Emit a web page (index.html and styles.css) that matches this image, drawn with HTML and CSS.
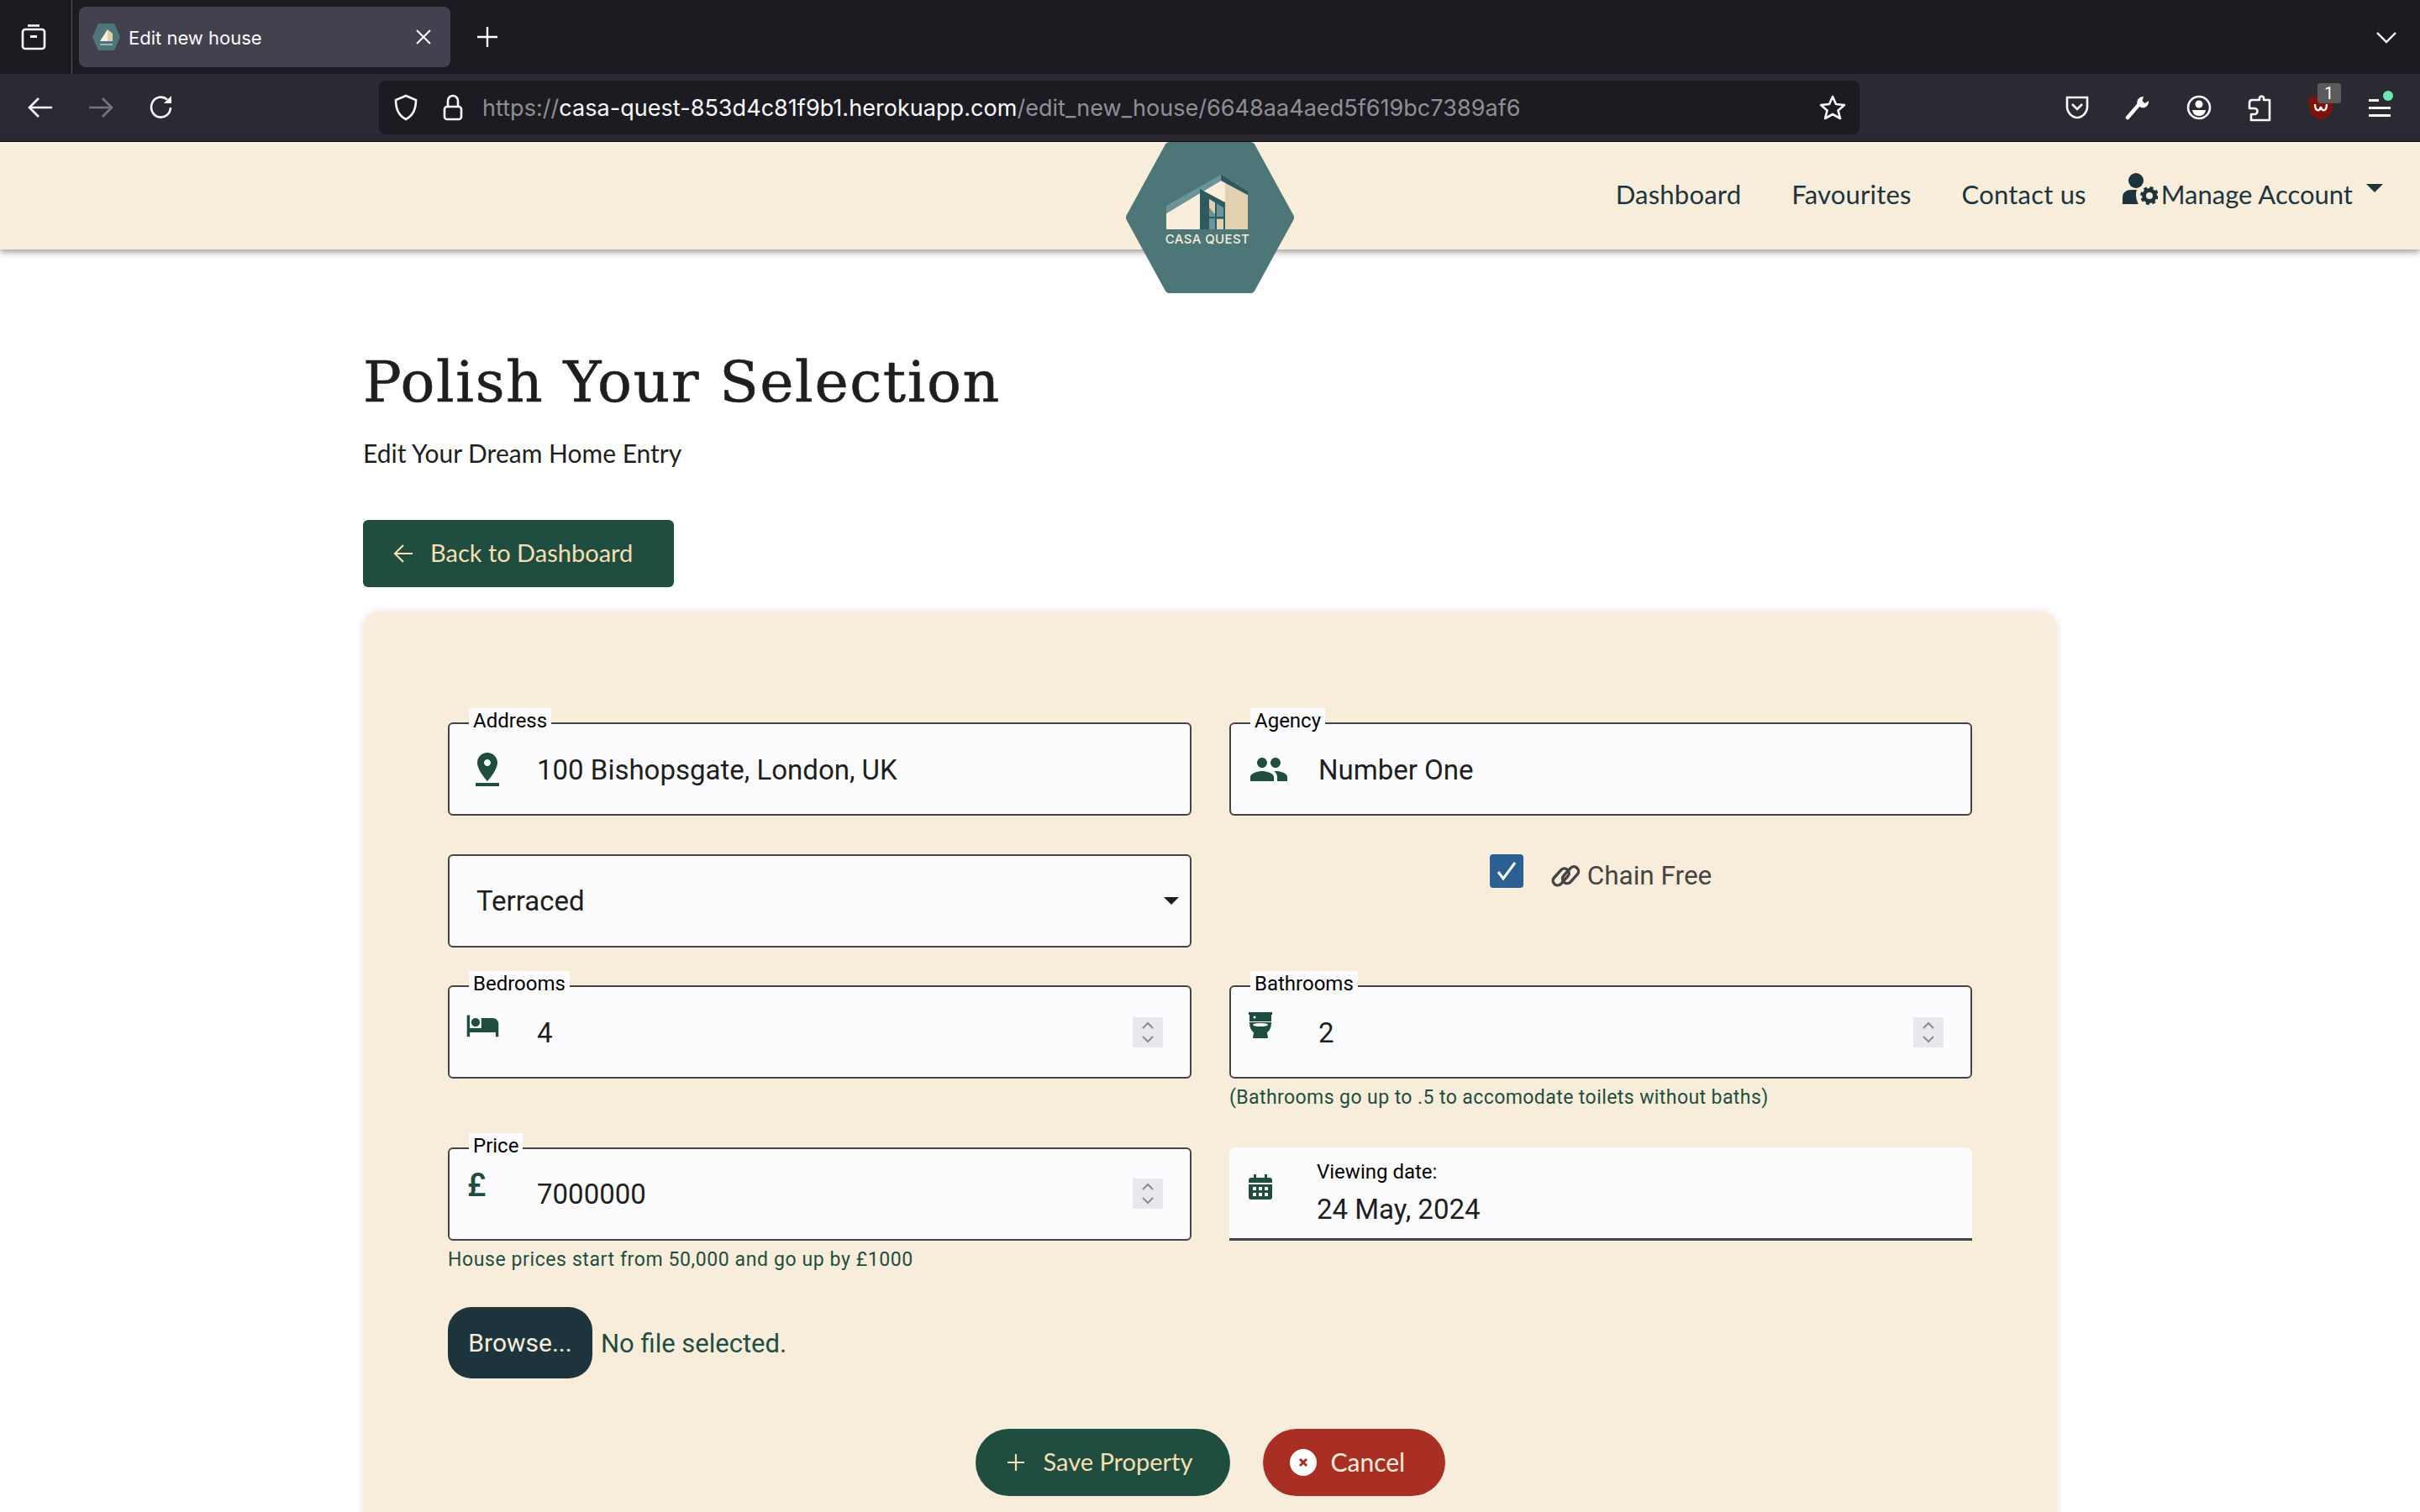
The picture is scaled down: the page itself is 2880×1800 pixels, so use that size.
FILE: index.html
```html
<!DOCTYPE html>
<html lang="en">
<head>
  <meta charset="UTF-8">
  <title>Edit new house</title>
  <link rel="stylesheet" href="styles.css">
</head>
<body>

  <div class="tab-strip">
    <div class="tab-list-btn">
      <svg width="30" height="32" viewBox="0 0 30 32" fill="none" stroke="#fbfbfe" stroke-width="2.6"><path d="M8 2.5h14"/><rect x="2" y="7" width="26" height="23" rx="3"/><rect x="11" y="14" width="8" height="3" fill="#fbfbfe" stroke="none"/></svg>
    </div>
    <div class="tab">
      <svg class="favicon" width="33" height="32" viewBox="0 0 33 32"><polygon points="7,0 26,0 33,16 26,32 7,32 0,16" fill="#4d7678"/><polygon points="9,21 18,7 18,21" fill="#f8eddb"/><polygon points="18,7 24,12 24,21 18,21" fill="#e2d0ae"/><path d="M9 25h15" stroke="#f8eddb" stroke-width="1"/></svg>
      <span class="tab-title">Edit new house</span>
      <svg class="tab-close" width="20" height="18" viewBox="0 0 20 18" stroke="#fbfbfe" stroke-width="2"><path d="M2 1l16 16M18 1L2 17"/></svg>
    </div>
    <svg class="new-tab" width="26" height="26" viewBox="0 0 26 26" stroke="#fbfbfe" stroke-width="2.4"><path d="M13 1v24M1 13h24"/></svg>
    <svg class="tab-chevron" width="26" height="15" viewBox="0 0 26 15" fill="none" stroke="#fbfbfe" stroke-width="2.4"><path d="M2 2l11 11L24 2"/></svg>
  </div>

  <div class="toolbar">
    <div class="nav-buttons">
      <svg width="30" height="26" viewBox="0 0 30 26" fill="none" stroke="#fbfbfe" stroke-width="2.6"><path d="M29 13H3M13 2L2 13l11 11"/></svg>
      <svg width="30" height="26" viewBox="0 0 30 26" fill="none" stroke="#77767d" stroke-width="2.6"><path d="M1 13h26M17 2l11 11-11 11"/></svg>
      <svg width="30" height="30" viewBox="0 0 30 30" fill="none" stroke="#fbfbfe" stroke-width="2.6"><path d="M26 15a11.5 12 0 1 1-4-9.5"/><path d="M27 1v9h-9z" fill="#fbfbfe" stroke="none"/></svg>
    </div>
    <div class="url-bar">
      <svg class="url-shield" width="30" height="32" viewBox="0 0 30 32" fill="none" stroke="#fbfbfe" stroke-width="2.6"><path d="M15 2l12 5c0 11-4 19-12 23C7 26 3 18 3 7z"/></svg>
      <svg class="url-lock" width="24" height="32" viewBox="0 0 24 32" fill="none" stroke="#fbfbfe" stroke-width="2.6"><path d="M6 15V8a6 6 0 0 1 12 0v7"/><rect x="2" y="15" width="20" height="15" rx="3"/></svg>
      <span class="url-text"><span class="url-dim">https://</span>casa-quest-853d4c81f9b1.herokuapp.com<span class="url-dim">/edit_new_house/6648aa4aed5f619bc7389af6</span></span>
      <svg class="url-star" width="32" height="32" viewBox="0 0 32 32" fill="none" stroke="#fbfbfe" stroke-width="2.6" stroke-linejoin="round"><path d="M16 3l4 9 10 1-7.500 6.500L25 29l-9-5-9 5 2.500-9.500L2 13l10-1z"/></svg>
    </div>
    <div class="toolbar-icons">
      <svg width="30" height="28" viewBox="0 0 30 28" fill="none" stroke="#fbfbfe" stroke-width="2.6"><path d="M3 2h24v11c0 7-6 13-12 13S3 20 3 13z"/><path d="M9 10l6 6 6-6"/></svg>
      <svg width="30" height="30" viewBox="0 0 30 30" fill="none" stroke="#fbfbfe"><path d="M3 27L16 12" stroke-width="4.500" stroke-linecap="round"/><path d="M22 2a7 7 0 0 0-7 10l4 3a7 7 0 0 0 9-8l-4.500 3-3-3z" fill="#fbfbfe" stroke="none"/></svg>
      <svg width="30" height="30" viewBox="0 0 30 30" fill="none" stroke="#fbfbfe" stroke-width="2.6"><circle cx="15" cy="15" r="13"/><circle cx="15" cy="11" r="4.500" fill="#fbfbfe" stroke="none"/><path d="M7 18h16c-1 5-4 7-8 7s-7-2-8-7z" fill="#fbfbfe" stroke="none"/></svg>
      <svg width="30" height="34" viewBox="0 0 30 34" fill="none" stroke="#fbfbfe" stroke-width="2.6"><path d="M15 8V5a3 3 0 0 1 5 0v3h7v24H5v-7h4a3.500 3.500 0 0 0 0-7H3v-6c0-2 1-4 3-4z" stroke-linejoin="round"/></svg>
      <div class="ublock">
        <svg width="30" height="30" viewBox="0 0 30 30"><path d="M1 2h28v13c0 7-6 12-14 15C7 27 1 22 1 15z" fill="#7c130b"/><path d="M8 11c0 9 6 9 7 3 1 6 7 6 7-3" fill="none" stroke="#fbfbfe" stroke-width="2.4"/></svg>
        <span class="ublock-badge">1</span>
      </div>
      <div class="app-menu">
        <span class="menu-line menu-line-short"></span>
        <span class="menu-line"></span>
        <span class="menu-line"></span>
        <span class="menu-dot"></span>
      </div>
    </div>
  </div>

  <header class="site-header">
    <a class="logo">
      <svg width="200" height="180" viewBox="0 0 200 180">
        <polygon points="52,6 148,6 194,90 148,174 52,174 6,90" fill="#4d7678" stroke="#4d7678" stroke-width="12" stroke-linejoin="round"/>
        <polygon points="48,85 113,46 113,104 48,104" fill="#f8eddb"/>
        <polygon points="48,76 113,39 113,46 48,85" fill="#6a9497"/>
        <polygon points="113,46 145,63 145,104 113,104" fill="#e2d0ae"/>
        <polygon points="113,46 118,48 118,104 113,104" fill="#f8eddb"/>
        <polygon points="113,39 145,59 145,63 113,46" fill="#2c5a5e"/>
        <polygon points="88,56 118,72 118,104 88,104" fill="#2c5a5e"/>
        <polygon points="99,68 116,78 116,104 99,104" fill="#6a9497"/>
        <polygon points="99,68 106,72 106,86 99,78" fill="#e2d0ae"/>
        <polygon points="108,92 116,92 116,104 108,104" fill="#e2d0ae"/>
        <path d="M107 70v34M99 90h17" stroke="#2c5a5e" stroke-width="2"/>
        <text class="logo-text" x="97" y="121" text-anchor="middle">CASA QUEST</text>
      </svg>
    </a>
    <nav class="main-nav">
      <a class="nav-link">Dashboard</a>
      <a class="nav-link">Favourites</a>
      <a class="nav-link">Contact us</a>
      <a class="nav-account">
        <svg width="42" height="38" viewBox="0 0 42 38" fill="#1e343c"><circle cx="16" cy="9" r="9"/><path d="M0 37V29c0-6 5-9 10-9h7c-2 5-1 11 2 17z"/><circle cx="32" cy="27" r="6.500" fill="none" stroke="#1e343c" stroke-width="5"/><circle cx="32" cy="27" r="9.500" fill="none" stroke="#1e343c" stroke-width="3" stroke-dasharray="4 3.500"/></svg>
        <span>Manage Account</span>
        <span class="nav-caret"></span>
      </a>
    </nav>
  </header>

  <main class="container">
    <h1 class="page-title">Polish Your Selection</h1>
    <p class="page-sub">Edit Your Dream Home Entry</p>
    <a class="btn-back">
      <svg width="24" height="24" viewBox="0 0 24 24" fill="none" stroke="#f6dfb0" stroke-width="2.2"><path d="M23 12H3M12 2L2 12l10 10"/></svg>
      <span class="btn-text">Back to Dashboard</span>
    </a>

    <div class="form-card">
      <div class="form-grid">

        <div class="cell">
          <div class="field">
            <span class="field-label">Address</span>
            <span class="field-icon"><svg width="48" height="48" viewBox="0 0 24 24" fill="#1f4d40"><path d="M18 8c0-3.310-2.690-6-6-6S6 4.690 6 8c0 4.500 6 11 6 11s6-6.500 6-11zm-8 0c0-1.100.9-2 2-2s2 .9 2 2-.89 2-2 2c-1.100 0-2-.9-2-2zM5 20v2h14v-2H5z"/></svg></span>
            <span class="field-value">100 Bishopsgate, London, UK</span>
          </div>
        </div>

        <div class="cell">
          <div class="field">
            <span class="field-label">Agency</span>
            <span class="field-icon"><svg width="48" height="48" viewBox="0 0 24 24" fill="#1f4d40"><path d="M16 11c1.660 0 2.990-1.340 2.990-3S17.660 5 16 5c-1.660 0-3 1.340-3 3s1.340 3 3 3zm-8 0c1.660 0 2.990-1.340 2.990-3S9.660 5 8 5C6.340 5 5 6.340 5 8s1.340 3 3 3zm0 2c-2.330 0-7 1.170-7 3.500V19h14v-2.500c0-2.330-4.670-3.500-7-3.500zm8 0c-.29 0-.62.02-.97.05 1.160.84 1.970 1.970 1.970 3.450V19h6v-2.500c0-2.330-4.670-3.500-7-3.500z"/></svg></span>
            <span class="field-value">Number One</span>
          </div>
        </div>

        <div class="cell">
          <div class="field field-select">
            <span class="field-value">Terraced</span>
            <span class="select-caret"></span>
          </div>
        </div>

        <div class="cell chain-cell">
          <span class="checkbox">
            <svg width="26" height="26" viewBox="0 0 26 26" fill="none" stroke="#fff" stroke-width="3"><path d="M3 14l6 8L23 3"/></svg>
          </span>
          <span class="chain-label">
            <svg width="36" height="30" viewBox="0 0 36 30" fill="none" stroke="#444" stroke-width="3.400"><rect x="1" y="11" width="23" height="11" rx="5.500" transform="rotate(-48 12 16)"/><rect x="12" y="8" width="23" height="11" rx="5.500" transform="rotate(-48 24 13)"/></svg>
            Chain Free
          </span>
        </div>

        <div class="cell">
          <div class="field">
            <span class="field-label">Bedrooms</span>
            <span class="field-icon icon-raised"><svg class="icon-bed" width="41" height="41" viewBox="0 0 24 24" fill="#1f4d40"><path d="M7 13c1.660 0 3-1.340 3-3S8.660 7 7 7s-3 1.340-3 3 1.340 3 3 3zm12-6h-8v7H3V5H1v15h2v-3h18v3h2v-9c0-2.210-1.790-4-4-4z"/></svg></span>
            <span class="field-value">4</span>
            <span class="spinner"><svg width="14" height="28" viewBox="0 0 14 28" fill="none" stroke="#8d8d96" stroke-width="2.2"><path d="M1 9l6-6 6 6M1 19l6 6 6-6"/></svg></span>
          </div>
        </div>

        <div class="cell">
          <div class="field">
            <span class="field-label">Bathrooms</span>
            <span class="field-icon icon-raised"><svg width="28" height="32" viewBox="0 0 28 32" fill="#1f4d40"><path d="M0 0h28v3h-1v8H1V3H0z"/><path d="M1 12h26c0 6-2 10-5 12l1 7H5l1-7c-3-2-5-6-5-12z"/><circle cx="7" cy="6" r="1.500" fill="#fcfcfe"/><ellipse cx="14" cy="15" rx="9" ry="2" fill="#fcfcfe"/></svg></span>
            <span class="field-value">2</span>
            <span class="spinner"><svg width="14" height="28" viewBox="0 0 14 28" fill="none" stroke="#8d8d96" stroke-width="2.2"><path d="M1 9l6-6 6 6M1 19l6 6 6-6"/></svg></span>
          </div>
          <p class="hint">(Bathrooms go up to .5 to accomodate toilets without baths)</p>
        </div>

        <div class="cell">
          <div class="field">
            <span class="field-label">Price</span>
            <span class="field-icon icon-raised"><span class="pound">£</span></span>
            <span class="field-value">7000000</span>
            <span class="spinner"><svg width="14" height="28" viewBox="0 0 14 28" fill="none" stroke="#8d8d96" stroke-width="2.2"><path d="M1 9l6-6 6 6M1 19l6 6 6-6"/></svg></span>
          </div>
          <p class="hint hint-wide">House prices start from 50,000 and go up by £1000</p>
        </div>

        <div class="cell">
          <div class="field field-date">
            <span class="field-icon icon-date"><svg width="28" height="30" viewBox="0 0 28 30" fill="#1f4d40"><path d="M6 0h3v4h10V0h3v4h3a3 3 0 0 1 3 3v3H0V7a3 3 0 0 1 3-3h3z"/><path fill-rule="evenodd" d="M0 12h28v15a3 3 0 0 1-3 3H3a3 3 0 0 1-3-3zM5 15v4h4v-4zm7 0v4h4v-4zm7 0v4h4v-4zM5 22v4h4v-4zm7 0v4h4v-4zm7 0v4h4v-4z"/></svg></span>
            <div class="date-text">
              <span class="date-label">Viewing date:</span>
              <span class="field-value">24 May, 2024</span>
            </div>
          </div>
        </div>

      </div>

      <div class="file-row">
        <span class="btn-browse">Browse...</span>
        <span class="file-name">No file selected.</span>
      </div>

      <div class="form-actions">
        <a class="btn-pill btn-save">
          <svg width="22" height="22" viewBox="0 0 22 22" stroke="#f6dfb0" stroke-width="2.2"><path d="M11 1v20M1 11h20"/></svg>
          <span class="btn-text">Save Property</span>
        </a>
        <a class="btn-pill btn-cancel">
          <svg width="32" height="32" viewBox="0 0 32 32"><circle cx="16" cy="16" r="16" fill="#fff"/><path d="M12 12l8 8M20 12l-8 8" stroke="#a92f25" stroke-width="3"/></svg>
          <span class="btn-text">Cancel</span>
        </a>
      </div>
    </div>
  </main>

</body>
</html>
```

FILE: styles.css
```css
* {
  box-sizing: border-box;
}

html, body {
  height: 1800px;
  overflow: hidden;
}

body {
  margin: 0;
  background: #ffffff;
  font-family: 'Roboto', sans-serif;
  color: #1e1e1e;
}

/* browser chrome */
.tab-strip {
  height: 88px;
  background: #1c1b22;
  display: flex;
  align-items: center;
}

.tab-list-btn {
  width: 86px;
  height: 88px;
  border-right: 1px solid #55545c;
  display: flex;
  align-items: center;
  justify-content: center;
  padding-right: 6px;
}

.tab {
  width: 442px;
  height: 72px;
  margin-left: 8px;
  background: #42414d;
  border-radius: 8px;
  display: flex;
  align-items: center;
  padding-left: 16px;
  color: #fbfbfe;
  font-family: 'Inter', sans-serif;
  font-size: 22px;
}

.favicon {
  margin-right: 10px;
}

.tab-title {
  flex: 1;
  padding-top: 2px;
}

.tab-close {
  margin-right: 22px;
}

.new-tab {
  margin-left: 31px;
}

.tab-chevron {
  margin-left: auto;
  margin-right: 27px;
}

.toolbar {
  height: 81px;
  background: #2b2a33;
  border-bottom: 1px solid #0c0c0d;
  display: flex;
  align-items: center;
}

.nav-buttons {
  width: 451px;
  display: flex;
  align-items: center;
  gap: 42px;
  padding-left: 33px;
}

.url-bar {
  width: 1762px;
  height: 64px;
  background: #1c1b22;
  border-radius: 8px;
  display: flex;
  align-items: center;
  padding-left: 17px;
  font-family: 'Inter', sans-serif;
  font-size: 27px;
  letter-spacing: 0.04px;
  color: #fbfbfe;
}

.url-shield {
  margin-right: 29px;
}

.url-lock {
  margin-right: 23px;
}

.url-text {
  flex: 1;
  white-space: nowrap;
}

.url-dim {
  color: #8f8f96;
}

.url-star {
  margin-right: 16px;
}

.toolbar-icons {
  display: flex;
  align-items: center;
  gap: 42.4px;
  margin-left: 244px;
}

.ublock {
  position: relative;
  width: 30px;
  height: 30px;
}

.ublock-badge {
  position: absolute;
  left: 11px;
  top: -14px;
  width: 28px;
  height: 24px;
  background: #5b5b5b;
  border-radius: 3px;
  color: #fbfbfe;
  font-size: 20px;
  line-height: 24px;
  text-align: center;
}

.app-menu {
  position: relative;
  width: 26px;
  display: flex;
  flex-direction: column;
  gap: 6px;
}

.menu-line {
  display: block;
  height: 3px;
  background: #fbfbfe;
}

.menu-line-short {
  width: 12px;
}

.menu-dot {
  position: absolute;
  right: -3px;
  top: -10px;
  width: 12px;
  height: 12px;
  border-radius: 50%;
  background: #6ee7b0;
}

/* site header */
.site-header {
  position: relative;
  height: 128px;
  background: #f8eddb;
  box-shadow: 0 3px 8px rgba(0, 0, 0, 0.4);
  display: flex;
  align-items: center;
  justify-content: flex-end;
}

.logo {
  position: absolute;
  left: 1340px;
  top: 0;
  line-height: 0;
  z-index: 2;
}

.logo-text {
  font-family: 'Inter', sans-serif;
  font-size: 15px;
  font-weight: 500;
  letter-spacing: 0.4px;
  fill: #f8eddb;
}

.main-nav {
  display: flex;
  align-items: center;
  gap: 60px;
  padding-right: 44px;
  padding-bottom: 5px;
  font-family: 'Lato', sans-serif;
  font-size: 31px;
  color: #1e343c;
}

.nav-link {
  letter-spacing: 0.2px;
}

.nav-account {
  display: flex;
  align-items: center;
  gap: 4px;
  margin-left: -17px;
}

.nav-account svg {
  margin-top: -12px;
}

.nav-caret {
  width: 0;
  height: 0;
  margin-left: 12px;
  margin-top: -14px;
  border-left: 10px solid transparent;
  border-right: 10px solid transparent;
  border-top: 10px solid #1e343c;
}

/* page */
.container {
  width: 2016px;
  margin: 0 auto;
}

.page-title {
  margin: 118px 0 0;
  font-family: 'DejaVu Serif', serif;
  font-weight: 400;
  font-size: 68px;
  line-height: 80px;
  letter-spacing: 1.55px;
  -webkit-text-stroke: 0.6px #1e1e1e;
  color: #1e1e1e;
}

.page-sub {
  margin: 24px 0 0;
  font-family: 'Lato', sans-serif;
  font-size: 30px;
  line-height: 40px;
  color: #1e1e1e;
}

.btn-text {
  padding-bottom: 3px;
}

.btn-back {
  width: 370px;
  height: 80px;
  margin-top: 60px;
  background: #1f4d40;
  border-radius: 6px;
  display: flex;
  align-items: center;
  gap: 20px;
  padding-left: 36px;
  font-family: 'Lato', sans-serif;
  font-size: 29px;
  color: #f6dfb0;
}

.form-card {
  margin-top: 29px;
  height: 1200px;
  background: #f8eddb;
  border-radius: 20px;
  box-shadow: 0 0 10px rgba(0, 0, 0, 0.12);
  padding: 132px 101px 0;
}

.form-grid {
  display: grid;
  grid-template-columns: 885px 884px;
  column-gap: 45px;
  row-gap: 45.5px;
}

.field {
  position: relative;
  height: 111px;
  background: #fcfcfe;
  border: 2px solid #444;
  border-radius: 6px;
  display: flex;
  align-items: center;
  padding-left: 21px;
}

.field-label {
  position: absolute;
  left: 23px;
  top: -19px;
  padding: 0 5px;
  height: 28px;
  background: #fcfcfe;
  font-size: 24px;
  line-height: 31px;
  color: #000;
}

.field-icon {
  width: 83px;
  flex: none;
  display: flex;
  line-height: 0;
}

.icon-raised {
  margin-bottom: 16px;
}

.icon-bed {
  margin-left: -2px;
}

.field-value {
  flex: 1;
  padding-top: 2px;
  font-size: 33px;
  line-height: 40px;
  color: #1e1e1e;
}

.pound {
  margin-top: -4px;
  font-size: 38px;
  line-height: 38px;
  font-weight: 500;
  color: #1f4d40;
}

.spinner {
  width: 36px;
  height: 36px;
  margin-right: 32px;
  background: #e9e9ed;
  display: flex;
  align-items: center;
  justify-content: center;
}

.field-select {
  padding-left: 32px;
}

.select-caret {
  width: 0;
  height: 0;
  margin-right: 13px;
  border-left: 9px solid transparent;
  border-right: 9px solid transparent;
  border-top: 9px solid #1e1e1e;
}

.chain-cell {
  display: flex;
  justify-content: center;
  align-items: flex-start;
  gap: 32px;
}

.checkbox {
  width: 40px;
  height: 40px;
  background: #2b6094;
  border-radius: 4px;
  display: flex;
  align-items: center;
  justify-content: center;
}

.chain-label {
  display: flex;
  align-items: center;
  gap: 8px;
  margin-top: 4px;
  font-size: 31.5px;
  line-height: 44px;
  color: #444;
}

.hint {
  margin: 9px 0 0;
  font-size: 23px;
  line-height: 27px;
  letter-spacing: 0.42px;
  color: #1f4d40;
}

.hint-wide {
  letter-spacing: 0.6px;
}

.field-date {
  border: 0;
  border-bottom: 3px solid #444;
  border-radius: 8px 8px 0 0;
  padding-left: 23px;
}

.icon-date {
  margin-bottom: 14px;
  width: 81px;
}

.date-text {
  display: flex;
  flex-direction: column;
  gap: 8px;
}

.date-label {
  font-size: 24px;
  line-height: 30px;
  color: #000;
}

.date-text .field-value {
  flex: none;
}

.file-row {
  margin-top: 43.5px;
  display: flex;
  align-items: center;
  gap: 10px;
}

.btn-browse {
  width: 172px;
  height: 85px;
  background: #1e343c;
  border-radius: 28px;
  display: flex;
  align-items: center;
  justify-content: center;
  font-size: 30px;
  color: #f8eddb;
}

.file-name {
  padding-top: 2px;
  font-size: 31px;
  color: #1f4d40;
}

.form-actions {
  margin-top: 60px;
  display: flex;
  justify-content: center;
  gap: 39px;
}

.btn-pill {
  height: 80px;
  border-radius: 40px;
  display: flex;
  align-items: center;
  font-family: 'Lato', sans-serif;
}

.btn-save {
  width: 303px;
  padding-left: 37px;
  gap: 22px;
  font-size: 29px;
  background: #1f4d40;
  color: #f6dfb0;
}

.btn-cancel {
  width: 217px;
  padding-left: 32px;
  gap: 17px;
  font-size: 30px;
  background: #a92f25;
  color: #f8eddb;
}
```
